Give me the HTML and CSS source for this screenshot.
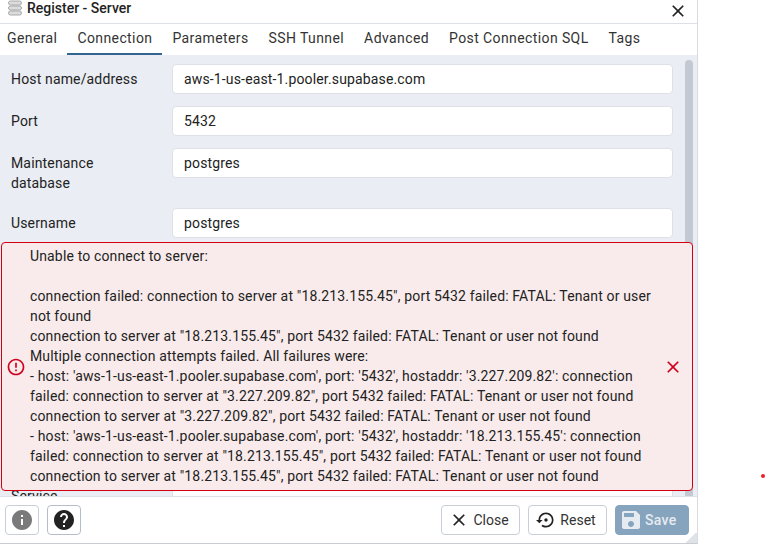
FILE: index.html
```
<!DOCTYPE html>
<html lang="en">
<head>
<meta charset="utf-8">
<title>Register - Server</title>
<link rel="stylesheet" href="styles.css">
</head>
<body>
<div class="dialog">
  <header class="titlebar">
    <div class="title">
      <svg class="server-icon" viewBox="0 0 16 16" width="16" height="16"><rect x="1.5" y="1" width="13" height="4" rx="2" fill="#dcdcdc" stroke="#a8a8a8"/><rect x="1.5" y="6" width="13" height="4" rx="2" fill="#dcdcdc" stroke="#a8a8a8"/><rect x="1.5" y="11" width="13" height="4" rx="2" fill="#dcdcdc" stroke="#a8a8a8"/></svg>
      <span>Register - Server</span>
    </div>
    <svg class="x-icon" viewBox="0 0 24 24" width="20" height="20"><path d="M19 6.41 17.59 5 12 10.59 6.41 5 5 6.41 10.59 12 5 17.59 6.41 19 12 13.41 17.59 19 19 17.59 13.41 12z" fill="#222"/></svg>
  </header>
  <nav class="tabs">
    <span class="tab">General</span>
    <span class="tab active">Connection</span>
    <span class="tab">Parameters</span>
    <span class="tab">SSH Tunnel</span>
    <span class="tab">Advanced</span>
    <span class="tab">Post Connection SQL</span>
    <span class="tab">Tags</span>
  </nav>
  <main class="content">
    <div class="form">
      <div class="row"><label class="label">Host name/address</label><div class="input">aws-1-us-east-1.pooler.supabase.com</div></div>
      <div class="row"><label class="label">Port</label><div class="input">5432</div></div>
      <div class="row two"><label class="label">Maintenance database</label><div class="input">postgres</div></div>
      <div class="row"><label class="label">Username</label><div class="input">postgres</div></div>
      <div class="row"><label class="label">Password</label><div class="input"></div></div>
      <div class="row"><label class="label">Save password?</label><div class="input"></div></div>
      <div class="row"><label class="label">Role</label><div class="input"></div></div>
      <div class="row"><label class="label">Kerberos</label><div class="input"></div></div>
      <div class="row tall"><label class="label">Connection</label><div class="input"></div></div>
      <div class="row"><label class="label">Service</label><div class="input"></div></div>
    </div>
    <div class="scrollbar"></div>
    <div class="error">
      <svg class="err-icon" viewBox="0 0 24 24" width="20" height="20"><path d="M11 15h2v2h-2zm0-8h2v6h-2zm.99-5C6.47 2 2 6.48 2 12s4.47 10 9.99 10C17.52 22 22 17.52 22 12S17.52 2 11.99 2zM12 20c-4.42 0-8-3.58-8-8s3.58-8 8-8 8 3.58 8 8-3.58 8-8 8z" fill="#d0021b"/></svg>
      <div class="err-text">Unable to connect to server:

connection failed: connection to server at "18.213.155.45", port 5432 failed: FATAL: Tenant or user not found
connection to server at "18.213.155.45", port 5432 failed: FATAL: Tenant or user not found
Multiple connection attempts failed. All failures were:
- host: 'aws-1-us-east-1.pooler.supabase.com', port: '5432', hostaddr: '3.227.209.82': connection failed: connection to server at "3.227.209.82", port 5432 failed: FATAL: Tenant or user not found
connection to server at "3.227.209.82", port 5432 failed: FATAL: Tenant or user not found
- host: 'aws-1-us-east-1.pooler.supabase.com', port: '5432', hostaddr: '18.213.155.45': connection failed: connection to server at "18.213.155.45", port 5432 failed: FATAL: Tenant or user not found
connection to server at "18.213.155.45", port 5432 failed: FATAL: Tenant or user not found</div>
      <svg class="err-close" viewBox="0 0 24 24" width="20" height="20"><path d="M19 6.41 17.59 5 12 10.59 6.41 5 5 6.41 10.59 12 5 17.59 6.41 19 12 13.41 17.59 19 19 17.59 13.41 12z" fill="#d0021b"/></svg>
    </div>
  </main>
  <footer class="footer">
    <div class="group">
      <button class="btn icon-btn"><svg viewBox="0 0 24 24" width="24" height="24"><path d="M12 2C6.48 2 2 6.48 2 12s4.48 10 10 10 10-4.48 10-10S17.52 2 12 2zm1 15h-2v-6h2v6zm0-8h-2V7h2v2z" fill="#7a7a7a"/></svg></button>
      <button class="btn icon-btn dark"><svg viewBox="0 0 24 24" width="24" height="24"><path d="M12 2C6.48 2 2 6.48 2 12s4.48 10 10 10 10-4.48 10-10S17.52 2 12 2zm1 17h-2v-2h2v2zm2.07-7.75-.9.92C13.45 12.9 13 13.5 13 15h-2v-.5c0-1.1.45-2.1 1.17-2.83l1.24-1.26c.37-.36.59-.86.59-1.41 0-1.1-.9-2-2-2s-2 .9-2 2H8c0-2.21 1.79-4 4-4s4 1.79 4 4c0 .88-.36 1.68-.93 2.25z" fill="#222"/></svg></button>
    </div>
    <div class="group">
      <button class="btn text-btn"><svg viewBox="0 0 24 24" width="20" height="20"><path d="M19 6.41 17.59 5 12 10.59 6.41 5 5 6.41 10.59 12 5 17.59 6.41 19 12 13.41 17.59 19 19 17.59 13.41 12z" fill="#222"/></svg>Close</button>
      <button class="btn text-btn"><svg viewBox="0 0 24 24" width="20" height="20"><path d="M14 12c0-1.1-.9-2-2-2s-2 .9-2 2 .9 2 2 2 2-.9 2-2zm-2-9c-4.97 0-9 4.03-9 9H0l4 4 4-4H5c0-3.87 3.13-7 7-7s7 3.13 7 7-3.13 7-7 7c-1.51 0-2.91-.49-4.06-1.3l-1.42 1.44C8.04 20.3 9.94 21 12 21c4.97 0 9-4.03 9-9s-4.03-9-9-9z" fill="#222"/></svg>Reset</button>
      <button class="btn save-btn"><svg viewBox="0 0 24 24" width="24" height="24"><path d="M17 3H5c-1.11 0-2 .9-2 2v14c0 1.1.89 2 2 2h14c1.1 0 2-.9 2-2V7l-4-4zm-5 16c-1.66 0-3-1.34-3-3s1.34-3 3-3 3 1.34 3 3-1.34 3-3 3zm3-10H5V5h10v4z" fill="#e6ebf1"/></svg>Save</button>
    </div>
    <span class="resize-grip"></span>
  </footer>
</div>
<span class="dot"></span>
</body>
</html>
```
FILE: styles.css
```
* { box-sizing: border-box; }
html, body { margin: 0; height: 100%; background: #fff; overflow: hidden; }
body { font-family: Roboto, "Liberation Sans", sans-serif; font-size: 14px; color: #222; position: relative; letter-spacing: 0.15px; }
.dialog { width: 698px; height: 544px; display: flex; flex-direction: column; border-right: 1px solid #d8dbe0; border-bottom: 1px solid #c9ccd1; background: #fff; }
.titlebar { height: 24px; flex: none; display: flex; align-items: center; justify-content: space-between; padding: 0 9px 2px 7px; border-bottom: 1px solid #dde0e6; }
.title { display: flex; align-items: center; gap: 4px; font-weight: 500; font-size: 14px; line-height: 16px; margin-top: -6px; letter-spacing: 0; }
.tabs { height: 31px; flex: none; display: flex; }
.tab { padding: 0 10px; line-height: 28px; height: 31px; color: #333; letter-spacing: 0.4px; white-space: nowrap; }
.tab:first-child { padding: 0 10px 0 7px; }
.tab.active { border-bottom: 2px solid #326690; }
.content { flex: 1; min-height: 0; position: relative; background: #eaedf3; overflow: hidden; }
.form { padding: 9px 24px 0 11px; display: flex; flex-direction: column; gap: 12px; }
.row { display: flex; align-items: flex-start; min-height: 30px; }
.row.two { min-height: 48px; }
.row.tall { min-height: 51px; }
.label { width: 161px; flex: none; padding: 5px 20px 0 0; line-height: 20px; }
.input { flex: 1; height: 30px; background: #fff; border: 1px solid #dde0e6; border-radius: 4px; padding: 0 11px; line-height: 28px; }
.scrollbar { position: absolute; top: 5px; right: 4px; bottom: 0; width: 8px; background: #c2c9d3; border-radius: 4px 4px 0 0; }
.error { position: absolute; left: 1px; top: 187px; width: 692px; height: 249px; display: flex; align-items: center; background: #f9ebeb; border: 1px solid #d4000f; border-radius: 4px; padding: 0 9px 0 4px; }
.err-icon { flex: none; }
.err-text { flex: 1; margin-left: 4px; padding-right: 7px; margin-top: -2px; line-height: 20px; white-space: pre-line; color: #222; }
.err-close { flex: none; }
.footer { flex: 1 0 47px; max-height: 47px; position: relative; display: flex; justify-content: space-between; align-items: flex-start; padding: 8px 8px 0 5px; border-top: 1px solid #dde0e6; background: #fff; }
.group { display: flex; gap: 8px; }
.btn { height: 30px; font: inherit; border-radius: 4px; background: #fff; border: 1px solid #c9ced8; display: flex; align-items: center; justify-content: center; padding: 0; color: #333; }
.icon-btn { width: 34px; }
.icon-btn.dark { border-color: #b5bcc9; }
.text-btn { width: 79px; gap: 4px; }
.text-btn svg { margin-left: -3px; }
.save-btn { width: 74px; justify-content: flex-start; padding-left: 3px; background: #86a4bd; border-color: #86a4bd; color: #e6ebf1; font-weight: 500; gap: 2px; letter-spacing: 0.3px; }
.resize-grip { position: absolute; right: 0; bottom: 0; width: 11px; height: 11px; background: linear-gradient(135deg, transparent 50%, #dfe2e7 50%); }
.dot { position: absolute; left: 761px; top: 474px; width: 4px; height: 4px; border-radius: 50%; background: #e8212b; }
```
